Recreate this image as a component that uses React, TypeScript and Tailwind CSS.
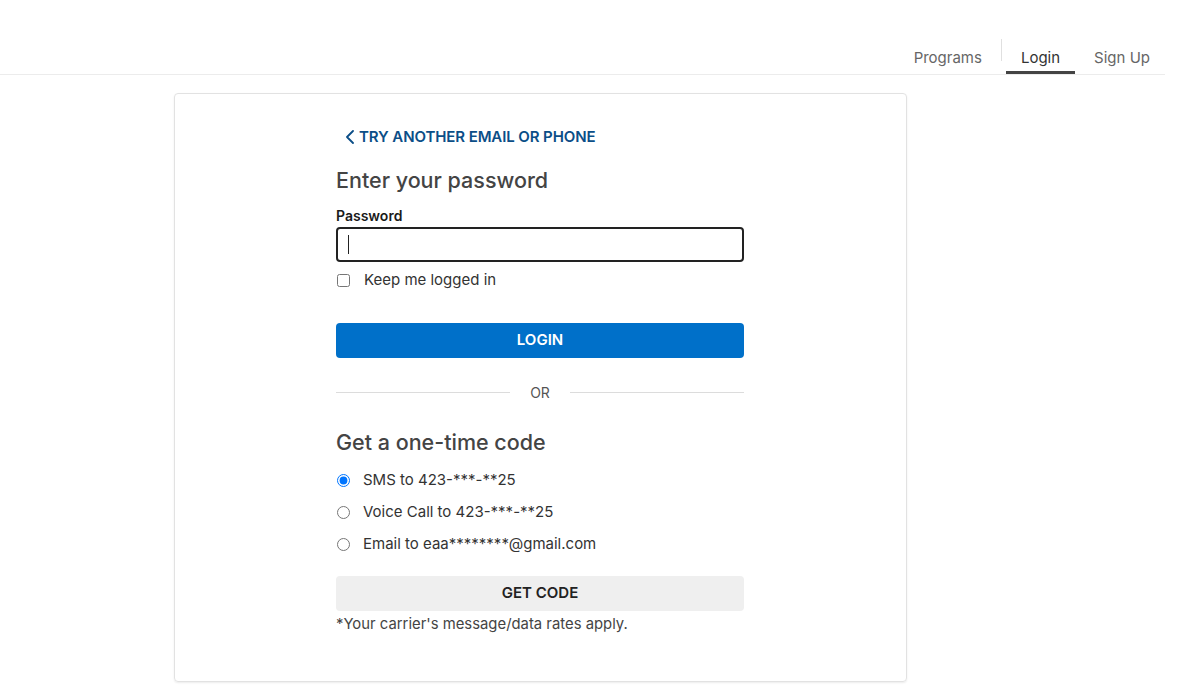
import React, { useState } from "react";

const codeOptions = [
  { id: "sms", label: "SMS to 423-***-**25" },
  { id: "voice", label: "Voice Call to 423-***-**25" },
  { id: "email", label: "Email to eaa********@gmail.com" },
];

export default function App() {
  const [method, setMethod] = useState("sms");
  const [keepLogged, setKeepLogged] = useState(false);
  const [password, setPassword] = useState("");

  return (
    <div className="min-h-screen w-full bg-white text-[#333] font-['Inter','Noto_Sans',sans-serif]">
      {/* Top nav */}
      <div className="w-[1165px] h-[75px] border-b border-[#ececec] flex justify-end items-end">
        <nav className="flex items-end h-[35px] text-[15px]">
          <a className="pl-[10px] pr-[10px] h-full flex items-end pb-[6px] leading-[20px] text-[#666]">Programs</a>
          <div className="w-px h-[22px] bg-[#e0e0e0] self-start ml-[9px] mr-[4px]" />
          <a className="h-full flex items-end px-[15px] pb-[3px] leading-[20px] border-b-[3px] border-[#444] text-[#333]">
            Login
          </a>
          <a className="h-full flex items-end pl-[19px] pr-[15px] pb-[6px] leading-[20px] text-[#666]">Sign Up</a>
        </nav>
      </div>

      {/* Card */}
      <div className="ml-[174px] mt-[18px] w-[733px] h-[589px] border border-[#e2e2e2] rounded-[4px] shadow-[0_1px_2px_rgba(0,0,0,0.08)]">
        <div className="w-[408px] ml-[161px] pt-[33px]">
          <a className="flex items-center gap-[5px] h-[20px] text-[15px] font-semibold text-[#0b4e87] tracking-[-0.1px]">
            <svg width="8" height="14" viewBox="0 0 8 14" fill="none" stroke="currentColor" strokeWidth="1.8" strokeLinecap="round" strokeLinejoin="round" className="ml-[10px]">
              <path d="M7 1L1 7l6 6" />
            </svg>
            TRY ANOTHER EMAIL OR PHONE
          </a>

          <h2 className="mt-[19px] h-[28px] leading-[28px] text-[21.5px] font-medium text-[#444]">Enter your password</h2>

          <label className="block mt-[12px] h-[20px] leading-[20px] text-[14px] font-semibold text-[#1a1a1a]">Password</label>
          <div className="relative mt-[1px]">
            <input
              type="password"
              value={password}
              onChange={(e) => setPassword(e.target.value)}
              className="w-full h-[35px] border-2 border-[#222] rounded-[4px] px-[11px] outline-none text-[15px]"
            />
            {password === "" && <span className="absolute left-[12px] top-[8px] w-px h-[19px] bg-[#222]" />}
          </div>

          <label className="mt-[8px] h-[20px] flex items-center gap-[14px] text-[15px] text-[#333]">
            <input
              type="checkbox"
              checked={keepLogged}
              onChange={(e) => setKeepLogged(e.target.checked)}
              className="w-[13px] h-[13px] m-0 ml-[1px]"
            />
            Keep me logged in
          </label>

          <button className="mt-[33px] w-full h-[35px] rounded-[4px] bg-[#0070c9] text-white text-[15px] font-semibold">
            LOGIN
          </button>

          <div className="mt-[24px] h-[20px] flex items-center">
            <div className="flex-1 h-px bg-[#dcdcdc]" />
            <span className="w-[60px] text-center text-[14px] text-[#555]">OR</span>
            <div className="flex-1 h-px bg-[#dcdcdc]" />
          </div>

          <h2 className="mt-[26px] h-[28px] leading-[28px] text-[21.5px] font-medium text-[#444]">Get a one-time code</h2>

          <div className="mt-[14px] flex flex-col gap-[12px]">
            {codeOptions.map((opt) => (
              <label key={opt.id} className="h-[20px] flex items-center gap-[13px] text-[15px] text-[#333]">
                <input
                  type="radio"
                  name="code"
                  checked={method === opt.id}
                  onChange={() => setMethod(opt.id)}
                  className="w-[13px] h-[13px] m-0 ml-[1px] accent-[#0075ff]"
                />
                {opt.label}
              </label>
            ))}
          </div>

          <button className="mt-[22px] w-full h-[35px] rounded-[4px] bg-[#efefef] text-[#222] text-[15px] font-semibold">
            GET CODE
          </button>
          <p className="mt-[3px] h-[20px] leading-[20px] text-[14.85px] text-[#444]">*Your carrier's message/data rates apply.</p>
        </div>
      </div>
    </div>
  );
}
